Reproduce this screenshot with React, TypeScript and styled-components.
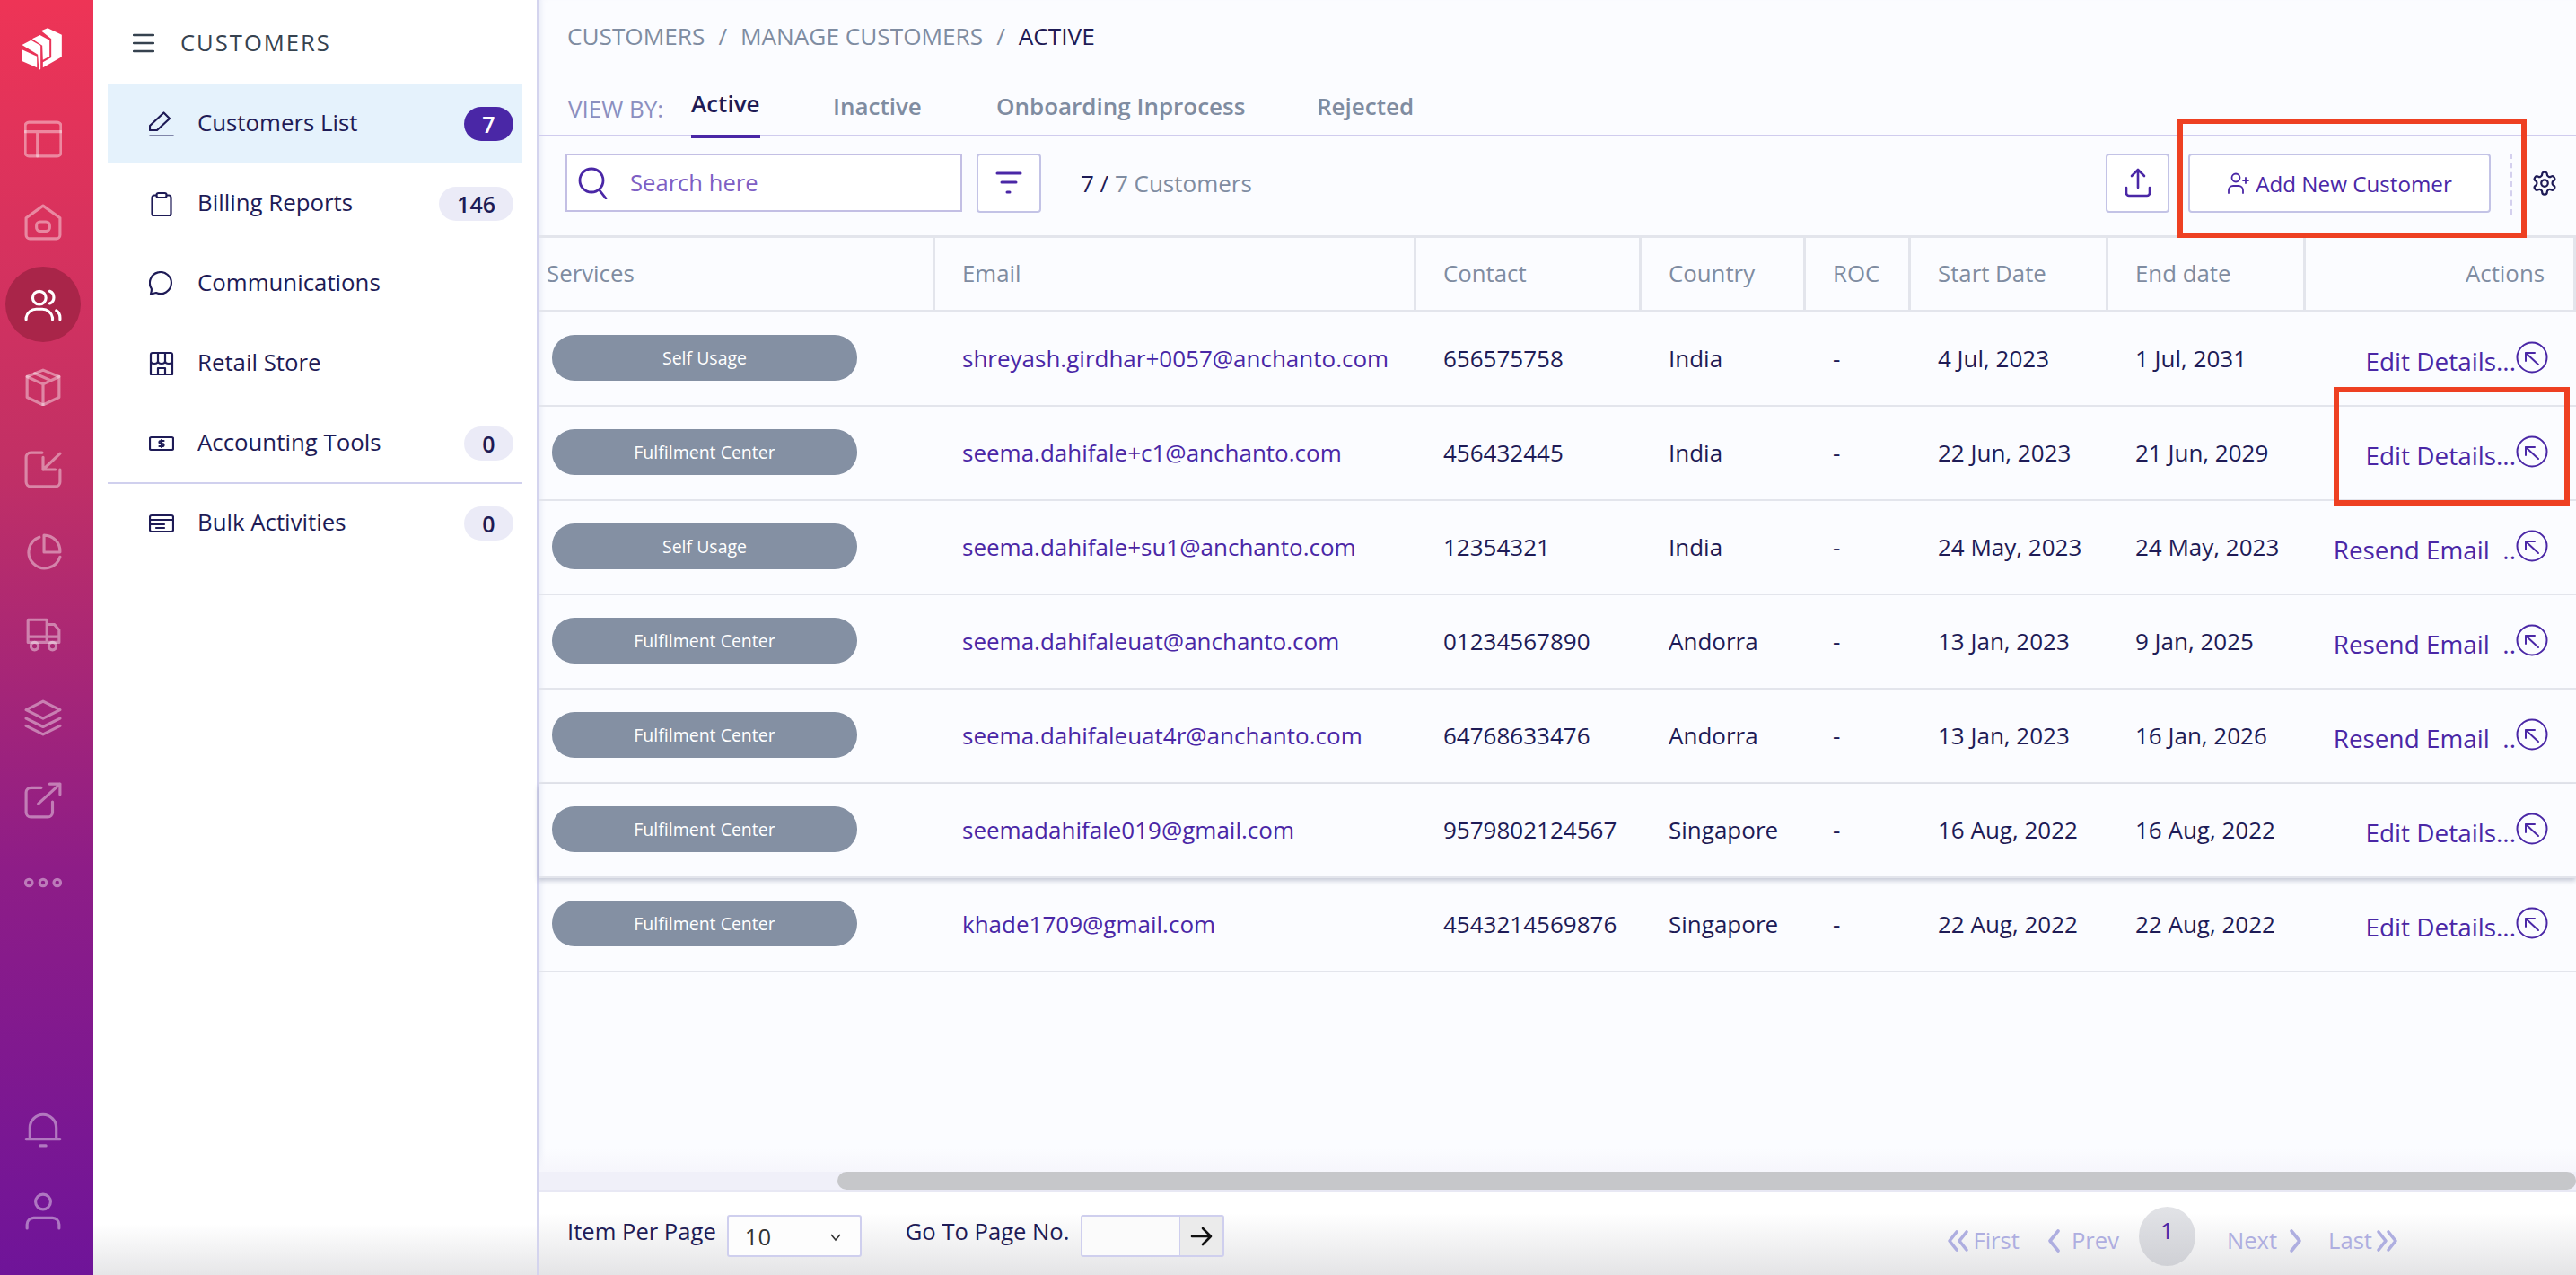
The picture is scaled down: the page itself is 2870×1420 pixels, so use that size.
import React from "react";
import styled, { createGlobalStyle } from "styled-components";

const Global = createGlobalStyle`
  html, body { margin: 0; padding: 0; background: #fff; }
  * { box-sizing: border-box; }
  body { font-family: "Open Sans", "Noto Sans", sans-serif; color: #1e1b56; }
`;

const Page = styled.div`
  position: relative;
  width: 2870px;
  height: 1420px;
  display: flex;
  overflow: hidden;
`;

const Rail = styled.nav`
  width: 104px;
  flex: none;
  height: 100%;
  background: linear-gradient(180deg, #ee3456 0%, #c23065 36%, #8e1d87 68%, #6f1499 100%);
  display: flex;
  flex-direction: column;
  align-items: center;
  padding-top: 30px;
`;

const LogoWrap = styled.div`
  height: 79px;
  width: 100%;
  display: flex;
  justify-content: center;
  padding-right: 12px;
`;

const RailSpot = styled.div<{ $active?: boolean }>`
  width: 84px;
  height: 92px;
  flex: none;
  display: flex;
  align-items: center;
  justify-content: center;
  margin-right: 8px;
  border-radius: 50%;
  ${(p) => (p.$active ? "background: #a92549; height: 84px; margin: 4px 8px 4px 0;" : "")}
  color: rgba(255, 255, 255, ${(p) => (p.$active ? 1 : 0.42)});
`;

const RailSpacer = styled.div`
  flex: 1;
`;

const RailEnd = styled.div`
  height: 25px;
  flex: none;
`;

const RailGlyph = styled.svg`
  width: 42px;
  height: 42px;
  fill: none;
  stroke: currentColor;
  stroke-width: 3;
  stroke-linecap: round;
  stroke-linejoin: round;
`;

const Panel = styled.aside`
  width: 496px;
  flex: none;
  height: 100%;
  background: #fff;
  border-right: 2px solid #d4d4ee;
  padding: 0 16px;
  display: flex;
  flex-direction: column;
  background-image: linear-gradient(180deg, transparent 96%, #e6e6e8 100%);
`;

const PanelHead = styled.div`
  height: 93px;
  display: flex;
  align-items: center;
  gap: 29px;
  padding: 2px 0 0 28px;
  color: #36424f;
  font-size: 25.6px;
  letter-spacing: 2px;
`;

const NavItem = styled.div<{ $active?: boolean }>`
  height: 89px;
  display: flex;
  align-items: center;
  padding: 0 10px 0 46px;
  background: ${(p) => (p.$active ? "#e5f2fc" : "transparent")};
  font-size: 25.8px;
  color: #1e1b56;
`;

const NavIcon = styled.svg`
  width: 28px;
  height: 28px;
  flex: none;
  margin-right: 26px;
  fill: none;
  stroke: #1e1b56;
  stroke-width: 2.2;
  stroke-linecap: round;
  stroke-linejoin: round;
`;

const NavLabel = styled.span`
  flex: 1;
  margin-top: -4px;
`;

const NavCount = styled.span<{ $active?: boolean }>`
  height: 38px;
  min-width: 55px;
  padding: 0 20px;
  border-radius: 19px;
  display: flex;
  align-items: center;
  justify-content: center;
  font-size: 25px;
  font-weight: 600;
  background: ${(p) => (p.$active ? "#4a27a6" : "#ebebf7")};
  color: ${(p) => (p.$active ? "#fff" : "#1e1b56")};
`;

const NavRule = styled.div`
  height: 2px;
  flex: none;
  background: #d0d0ee;
  margin: -1px 0;
  position: relative;
`;

const Main = styled.main`
  flex: 1;
  min-width: 0;
  height: 100%;
  display: flex;
  flex-direction: column;
  background: #fbfcff;
  box-shadow: inset 7px 0 6px -5px rgba(190, 195, 225, 0.35);
`;

const Crumbs = styled.div`
  height: 80px;
  padding: 0 0 0 32px;
  display: flex;
  align-items: center;
  font-size: 26.2px;
  color: #7f8ca1;
  span { margin: 0 15px; }
  b { font-weight: 400; color: #1e1b56; }
`;

const TabRow = styled.div`
  height: 72px;
  border-bottom: 2px solid #d0ccee;
  padding-left: 33px;
  display: flex;
  align-items: stretch;
`;

const ViewBy = styled.div`
  width: 137px;
  font-size: 26px;
  color: #8b8fc0;
  padding-top: 23px;
`;

const Tab = styled.div<{ $active?: boolean; $w: number }>`
  width: ${(p) => p.$w}px;
  flex: none;
  padding-top: ${(p) => (p.$active ? 17 : 20)}px;
  font-size: 26px;
  font-weight: 600;
  white-space: nowrap;
  color: ${(p) => (p.$active ? "#1e1b56" : "#7f8ca1")};
`;

const TabActiveMark = styled.div`
  position: relative;
  &::after {
    content: "";
    position: absolute;
    left: 0;
    width: 77px;
    top: 70px;
    height: 4px;
    background: #4a27a6;
  }
`;

const Toolbar = styled.div`
  height: 113px;
  padding: 19px 0 0 30px;
  border-bottom: 3px solid #e3e5ec;
  display: flex;
  align-items: flex-start;
`;

const Search = styled.div`
  width: 442px;
  height: 65px;
  background: #fff;
  border: 2px solid #c3bfe4;
  display: flex;
  align-items: center;
  padding-left: 12px;
  gap: 24px;
  font-size: 25.6px;
  color: #7e5fc4;
`;

const IconButton = styled.div<{ $w: number; $ml: number }>`
  width: ${(p) => p.$w}px;
  height: 66px;
  margin-left: ${(p) => p.$ml}px;
  flex: none;
  background: #fff;
  border: 2px solid #c3c3e6;
  border-radius: 4px;
  display: flex;
  align-items: center;
  justify-content: center;
  gap: 6px;
  color: #4a27a6;
  font-size: 24.2px;
`;

const CountText = styled.div`
  margin-left: 44px;
  height: 66px;
  flex: 1;
  display: flex;
  align-items: center;
  font-size: 26px;
  color: #7f8ca1;
  b { font-weight: 400; color: #1e1b56; white-space: pre; }
`;

const DashRule = styled.div`
  width: 0;
  height: 68px;
  margin-left: 22px;
  border-left: 2px dashed #d4d0ee;
`;

const GearSlot = styled.div`
  width: 71px;
  height: 66px;
  display: flex;
  align-items: center;
  justify-content: center;
  color: #1e1b56;
`;

const columns = "440px 536px 251px 183px 117px 220px 220px 303px";

const HeadRow = styled.div`
  display: grid;
  grid-template-columns: 442px 536px 251px 183px 117px 220px 220px 301px;
  height: 83px;
  flex: none;
  border-bottom: 3px solid #e3e5ec;
`;

const HeadCell = styled.div<{ $first?: boolean; $end?: boolean }>`
  display: flex;
  align-items: center;
  padding-left: ${(p) => (p.$first ? 9 : 30)}px;
  padding-right: 32px;
  padding-bottom: 2px;
  font-size: 25.8px;
  color: #7f8ca1;
  border-right: 3px solid #e3e5ec;
  justify-content: ${(p) => (p.$end ? "flex-end" : "flex-start")};
`;

const Row = styled.div<{ $shadow?: boolean }>`
  position: relative;
  display: grid;
  grid-template-columns: ${columns};
  height: 105px;
  flex: none;
  border-bottom: 2px solid #e3e5ec;
  ${(p) => (p.$shadow ? "box-shadow: 0 3px 5px rgba(90, 100, 130, .32); z-index: 1;" : "")}
`;

const Cell = styled.div`
  display: flex;
  align-items: center;
  padding-left: 32px;
  padding-bottom: 2px;
  font-size: 26px;
  white-space: nowrap;
  color: #1e1b56;
`;

const PillCell = styled.div`
  display: flex;
  align-items: center;
  padding-left: 15px;
  padding-bottom: 2px;
`;

const Pill = styled.div`
  width: 340px;
  height: 51px;
  border-radius: 25px;
  background: #8490a3;
  color: #fff;
  font-size: 19.5px;
  display: flex;
  align-items: center;
  justify-content: center;
`;

const EmailLink = styled(Cell)`
  color: #4a27a6;
`;

const ActionCell = styled.div`
  display: flex;
  align-items: center;
  justify-content: flex-end;
  padding-right: 31px;
`;

const ActionText = styled.span`
  font-size: 27.9px;
  color: #4a27a6;
  white-space: pre;
  margin-top: 4px;
`;

const Circle = styled.svg`
  width: 36px;
  height: 36px;
  flex: none;
  margin-top: -4px;
  fill: none;
  stroke: #4a27a6;
  stroke-width: 2;
  stroke-linecap: round;
  stroke-linejoin: round;
`;

const Grow = styled.div`
  flex: 1;
  min-height: 0;
  background: linear-gradient(180deg, transparent calc(100% - 26px), #f6f6fc 100%);
`;

const ScrollTrack = styled.div`
  height: 20px;
  flex: none;
  padding-left: 333px;
  background: #f0f0f9;
`;

const ScrollThumb = styled.div`
  height: 20px;
  border-radius: 10px;
  background: #c6c7ca;
`;

const Footer = styled.footer`
  height: 95px;
  flex: none;
  border-top: 3px solid #e8e8f4;
  background: linear-gradient(180deg, #fff 0%, #fff 25%, #e4e4e6 100%);
  display: flex;
  align-items: center;
  padding: 5px 0 0 32px;
  font-size: 25.6px;
  color: #1e1b56;
`;

const FootLabel = styled.span`
  margin-top: -10px;
  white-space: nowrap;
`;

const SelectBox = styled.div`
  width: 150px;
  height: 47px;
  margin: 0 49px 0 12px;
  border: 2px solid #cfcfee;
  border-radius: 3px;
  background: #fdfdfd;
  display: flex;
  align-items: center;
  justify-content: space-between;
  padding: 2px 20px 0 18px;
  color: #333;
  font-size: 25.6px;
`;

const GoBox = styled.div`
  width: 160px;
  height: 47px;
  margin-left: 13px;
  border: 2px solid #cfcfee;
  border-radius: 3px;
  display: flex;
  overflow: hidden;
  flex: none;
`;

const GoInput = styled.div`
  flex: 1;
  background: #fbfbfb;
`;

const GoArrow = styled.div`
  width: 48px;
  background: #ebebeb;
  border-left: 1px solid #cfcfee;
  display: flex;
  align-items: center;
  justify-content: center;
  color: #111;
`;

const Pager = styled.div`
  margin-left: auto;
  margin-right: 198px;
  display: flex;
  align-items: center;
  color: #aeaee0;
  font-size: 25.6px;
`;

const PageLink = styled.span<{ $ml: number; $gap: number }>`
  margin-left: ${(p) => p.$ml}px;
  display: flex;
  align-items: center;
  gap: ${(p) => p.$gap}px;
  white-space: nowrap;
  padding-top: 10px;
`;

const PageCurrent = styled.div`
  width: 63px;
  height: 66px;
  margin-left: 22px;
  border-radius: 50%;
  background: linear-gradient(180deg, #e2e3e7, #cfd0d5);
  color: #4a27a6;
  display: flex;
  align-items: center;
  justify-content: center;
  padding-bottom: 12px;
  font-size: 25.6px;
`;

const Chev = styled.svg`
  width: 18px;
  height: 34px;
  fill: none;
  stroke: #aeaee0;
  stroke-width: 3.6;
  stroke-linecap: round;
  stroke-linejoin: round;
`;

const DoubleChev = styled(Chev)`
  width: 26px;
`;

const Callout = styled.div<{ $x: number; $y: number; $w: number; $h: number }>`
  position: absolute;
  left: ${(p) => p.$x}px;
  top: ${(p) => p.$y}px;
  width: ${(p) => p.$w}px;
  height: ${(p) => p.$h}px;
  border: 6px solid #ee4022;
  pointer-events: none;
  z-index: 5;
`;

const rows = [
  ["Self Usage", "shreyash.girdhar+0057@anchanto.com", "656575758", "India", "4 Jul, 2023", "1 Jul, 2031", "Edit Details..."],
  ["Fulfilment Center", "seema.dahifale+c1@anchanto.com", "456432445", "India", "22 Jun, 2023", "21 Jun, 2029", "Edit Details..."],
  ["Self Usage", "seema.dahifale+su1@anchanto.com", "12354321", "India", "24 May, 2023", "24 May, 2023", "Resend Email  .."],
  ["Fulfilment Center", "seema.dahifaleuat@anchanto.com", "01234567890", "Andorra", "13 Jan, 2023", "9 Jan, 2025", "Resend Email  .."],
  ["Fulfilment Center", "seema.dahifaleuat4r@anchanto.com", "64768633476", "Andorra", "13 Jan, 2023", "16 Jan, 2026", "Resend Email  .."],
  ["Fulfilment Center", "seemadahifale019@gmail.com", "9579802124567", "Singapore", "16 Aug, 2022", "16 Aug, 2022", "Edit Details..."],
  ["Fulfilment Center", "khade1709@gmail.com", "4543214569876", "Singapore", "22 Aug, 2022", "22 Aug, 2022", "Edit Details..."],
];

const headers = ["Services", "Email", "Contact", "Country", "ROC", "Start Date", "End date"];

const G = ({ children }: { children: React.ReactNode }) => <RailGlyph viewBox="0 0 40 40">{children}</RailGlyph>;
const N = ({ children }: { children: React.ReactNode }) => <NavIcon viewBox="0 0 28 28">{children}</NavIcon>;

export default function App() {
  return (
    <Page>
      <Global />
      <Rail>
        <LogoWrap>
          <svg width="47" height="50" viewBox="38 30 140 150" fill="#fff">
            <polygon points="42,106 92,128 92,166 42,144" />
            <polygon points="42,90 72,74 104,92 104,170 99,175 95,122" />
            <polygon points="76,70 102,57 134,74 134,128 112,140 110,92" />
            <polygon points="106,43 128,34 175,56 175,130 112,166 112,148 140,132 140,70" />
          </svg>
        </LogoWrap>
        <RailSpot>
          <G><rect x="1" y="2" width="38" height="36" rx="4" /><path d="M1 12h38M14 12v26" /></G>
        </RailSpot>
        <RailSpot>
          <G><path d="M2 16 20 3l18 13v18a4 4 0 0 1-4 4H6a4 4 0 0 1-4-4z" /><rect x="13" y="20" width="14" height="10" rx="4" /></G>
        </RailSpot>
        <RailSpot $active>
          <G><circle cx="16" cy="13" r="7" /><path d="M2 36v-2a11 11 0 0 1 11-9h6a11 11 0 0 1 11 9v2M27 6a7 7 0 0 1 0 13M38 36v-2c0-3-1.500-6-4-7.500" /></G>
        </RailSpot>
        <RailSpot>
          <G><path d="M20 2 37 9v22l-17 8-17-8V9z" /><path d="M3 9l17 8 17-8M20 17v22M11 5.500 28 13" /></G>
        </RailSpot>
        <RailSpot>
          <G><path d="M19 2H7a5 5 0 0 0-5 5v26a5 5 0 0 0 5 5h26a5 5 0 0 0 5-5V20" /><path d="M38 3 20 20M20 7v13h13" /></G>
        </RailSpot>
        <RailSpot>
          <G><path d="M16 4A17 17 0 1 0 38 25" /><path d="M21 2a17 17 0 0 1 17 18H21z" /></G>
        </RailSpot>
        <RailSpot>
          <G><path d="M4 4h20v24H4zM24 9h8l5 6v13H24M4 22h33" /><circle cx="11" cy="32" r="4" /><circle cx="30" cy="32" r="4" /></G>
        </RailSpot>
        <RailSpot>
          <G><path d="M20 3 38 12 20 21 2 12zM2 21l18 9 18-9M2 29l18 9 18-9" /></G>
        </RailSpot>
        <RailSpot>
          <G><path d="M18 7H7a5 5 0 0 0-5 5v21a5 5 0 0 0 5 5h18a5 5 0 0 0 5-5V22" /><path d="M15 24 38 3M27 3h11v11" /></G>
        </RailSpot>
        <RailSpot>
          <G><circle cx="5" cy="20" r="3.600" /><circle cx="20" cy="20" r="3.600" /><circle cx="35" cy="20" r="3.600" /></G>
        </RailSpot>
        <RailSpacer />
        <RailSpot>
          <G><path d="M6 30V19a14 14 0 0 1 28 0v11M2 31h36M17 38h6" /></G>
        </RailSpot>
        <RailSpot>
          <G><circle cx="20" cy="10" r="8" /><path d="M3 38v-4a7 7 0 0 1 7-7h20a7 7 0 0 1 7 7v4" /></G>
        </RailSpot>
        <RailEnd />
      </Rail>

      <Panel>
        <PanelHead>
          <svg width="24" height="24" viewBox="0 0 24 24" fill="none" stroke="#36424f" strokeWidth="2.4" strokeLinecap="round">
            <path d="M1 3h22M1 12h22M1 21h22" />
          </svg>
          CUSTOMERS
        </PanelHead>
        <NavItem $active>
          <N><path d="M1 16 16.500 1.500 23 8 9 21H1zM1 27.500h26" /></N>
          <NavLabel>Customers List</NavLabel>
          <NavCount $active>7</NavCount>
        </NavItem>
        <NavItem>
          <N><path d="M8 4.500H6a2.500 2.500 0 0 0-2.500 2.500v18A2.500 2.500 0 0 0 6 27.500h16a2.500 2.500 0 0 0 2.500-2.500V7A2.500 2.500 0 0 0 22 4.500h-2" /><rect x="8.500" y="2" width="11" height="5" rx="2" /></N>
          <NavLabel>Billing Reports</NavLabel>
          <NavCount>146</NavCount>
        </NavItem>
        <NavItem>
          <N><path d="M2 25.500c.5-2 1.200-4 .8-6A12 12 0 1 1 8 24c-2 .3-4 1.300-6 1.500z" /></N>
          <NavLabel>Communications</NavLabel>
        </NavItem>
        <NavItem>
          <N><path d="M2 12V4a2 2 0 0 1 2-2h20a2 2 0 0 1 2 2v8M2 10v16h24V10M10 2v9M18 2v9M2 11c0 4 8 4 8 0 0 4 8 4 8 0 0 4 8 4 8 0M10 26v-7h8v7" /></N>
          <NavLabel>Retail Store</NavLabel>
        </NavItem>
        <NavItem>
          <N><rect x="1" y="7" width="26" height="14" rx="1.500" /><path d="M16.500 11h-3.500a1.500 1.500 0 0 0 0 3h2a1.500 1.500 0 0 1 0 3h-3.500M14 10v8" /></N>
          <NavLabel>Accounting Tools</NavLabel>
          <NavCount>0</NavCount>
        </NavItem>
        <NavRule />
        <NavItem>
          <N><rect x="1" y="5" width="26" height="18" rx="2" /><path d="M1 10h26M1 15h16M8 19h9" /></N>
          <NavLabel>Bulk Activities</NavLabel>
          <NavCount>0</NavCount>
        </NavItem>
      </Panel>

      <Main>
        <Crumbs>
          CUSTOMERS<span>/</span>MANAGE CUSTOMERS<span>/</span><b>ACTIVE</b>
        </Crumbs>
        <TabRow>
          <ViewBy>VIEW BY:</ViewBy>
          <TabActiveMark>
            <Tab $active $w={158}>Active</Tab>
          </TabActiveMark>
          <Tab $w={182}>Inactive</Tab>
          <Tab $w={357}>Onboarding Inprocess</Tab>
          <Tab $w={120}>Rejected</Tab>
        </TabRow>
        <Toolbar>
          <Search>
            <svg width="34" height="36" viewBox="0 0 34 36" fill="none" stroke="#4a27a6" strokeWidth="2.8" strokeLinecap="round">
              <circle cx="15" cy="15" r="13" />
              <path d="M24 26l7 9" />
            </svg>
            Search here
          </Search>
          <IconButton $w={72} $ml={16}>
            <svg width="30" height="26" viewBox="0 0 30 26" fill="none" stroke="#4a27a6" strokeWidth="3" strokeLinecap="round">
              <path d="M2 2h26M7 12h16M13 23h3" />
            </svg>
          </IconButton>
          <CountText><b>7 / </b>7 Customers</CountText>
          <IconButton $w={71} $ml={0}>
            <svg width="30" height="34" viewBox="0 0 30 34" fill="none" stroke="#4a27a6" strokeWidth="2.6" strokeLinecap="round" strokeLinejoin="round">
              <path d="M15 22V2M8 9l7-7 7 7M2 22v6a3 3 0 0 0 3 3h20a3 3 0 0 0 3-3v-6" />
            </svg>
          </IconButton>
          <IconButton $w={337} $ml={21}>
            <svg width="26" height="26" viewBox="0 0 26 26" fill="none" stroke="#4a27a6" strokeWidth="1.8" strokeLinecap="round">
              <circle cx="10" cy="7" r="4.500" />
              <path d="M2 24v-3a5 5 0 0 1 5-5h6a5 5 0 0 1 5 5v3M21 7v6M18 10h6" />
            </svg>
            Add New Customer
          </IconButton>
          <DashRule />
          <GearSlot>
            <svg width="30" height="30" viewBox="0 0 24 24" fill="none" stroke="currentColor" strokeWidth="1.800" strokeLinecap="round" strokeLinejoin="round">
              <path d="M12.220 2h-.44a2 2 0 0 0-2 2v.18a2 2 0 0 1-1 1.730l-.43.250a2 2 0 0 1-2 0l-.15-.080a2 2 0 0 0-2.730.730l-.220.380a2 2 0 0 0 .730 2.730l.150.100a2 2 0 0 1 1 1.720v.510a2 2 0 0 1-1 1.740l-.150.090a2 2 0 0 0-.730 2.730l.220.380a2 2 0 0 0 2.730.730l.150-.080a2 2 0 0 1 2 0l.430.250a2 2 0 0 1 1 1.730V20a2 2 0 0 0 2 2h.440a2 2 0 0 0 2-2v-.180a2 2 0 0 1 1-1.730l.430-.250a2 2 0 0 1 2 0l.150.080a2 2 0 0 0 2.730-.730l.220-.390a2 2 0 0 0-.730-2.730l-.150-.080a2 2 0 0 1-1-1.740v-.500a2 2 0 0 1 1-1.740l.150-.090a2 2 0 0 0 .730-2.730l-.220-.380a2 2 0 0 0-2.730-.730l-.150.080a2 2 0 0 1-2 0l-.430-.250a2 2 0 0 1-1-1.730V4a2 2 0 0 0-2-2z" />
              <circle cx="12" cy="12" r="3" />
            </svg>
          </GearSlot>
        </Toolbar>
        <HeadRow>
          {headers.map((h, i) => (
            <HeadCell key={h} $first={i === 0}>{h}</HeadCell>
          ))}
          <HeadCell $end>Actions</HeadCell>
        </HeadRow>
        {rows.map((r, i) => (
          <Row key={r[1]} $shadow={i === 5}>
            <PillCell><Pill>{r[0]}</Pill></PillCell>
            <EmailLink>{r[1]}</EmailLink>
            <Cell>{r[2]}</Cell>
            <Cell>{r[3]}</Cell>
            <Cell>-</Cell>
            <Cell>{r[4]}</Cell>
            <Cell>{r[5]}</Cell>
            <ActionCell>
              <ActionText>{r[6]}</ActionText>
              <Circle viewBox="0 0 36 36">
                <circle cx="18" cy="18" r="16.500" />
                <path d="M25 26 11 13M11 22v-9h10" />
              </Circle>
            </ActionCell>
          </Row>
        ))}
        <Grow />
        <ScrollTrack><ScrollThumb /></ScrollTrack>
        <Footer>
          <FootLabel>Item Per Page</FootLabel>
          <SelectBox>
            10
            <svg width="14" height="10" viewBox="0 0 14 10" fill="none" stroke="#333" strokeWidth="1.600"><path d="M2 2l5 6 5-6" /></svg>
          </SelectBox>
          <FootLabel>Go To Page No.</FootLabel>
          <GoBox>
            <GoInput />
            <GoArrow>
              <svg width="26" height="24" viewBox="0 0 26 24" fill="none" stroke="currentColor" strokeWidth="2.600" strokeLinecap="round" strokeLinejoin="round"><path d="M2 12h21M14 3l9 9-9 9" /></svg>
            </GoArrow>
          </GoBox>
          <Pager>
            <PageLink $ml={0} $gap={3}>
              <DoubleChev viewBox="0 0 26 34"><path d="M11 7 3 17l8 10M22 7l-8 10 8 10" /></DoubleChev>
              First
            </PageLink>
            <PageLink $ml={30} $gap={10}>
              <Chev viewBox="0 0 18 34"><path d="M13 6 4 17l9 11" /></Chev>
              <span>Prev</span>
            </PageLink>
            <PageCurrent>1</PageCurrent>
            <PageLink $ml={35} $gap={11}>
              Next
              <Chev viewBox="0 0 18 34"><path d="M5 6l9 11-9 11" /></Chev>
            </PageLink>
            <PageLink $ml={28} $gap={3}>
              Last
              <DoubleChev viewBox="0 0 26 34"><path d="M4 7l8 10-8 10M15 7l8 10-8 10" /></DoubleChev>
            </PageLink>
          </Pager>
        </Footer>
      </Main>

      <Callout $x={2426} $y={132} $w={389} $h={133} />
      <Callout $x={2600} $y={431} $w={263} $h={132} />
    </Page>
  );
}
